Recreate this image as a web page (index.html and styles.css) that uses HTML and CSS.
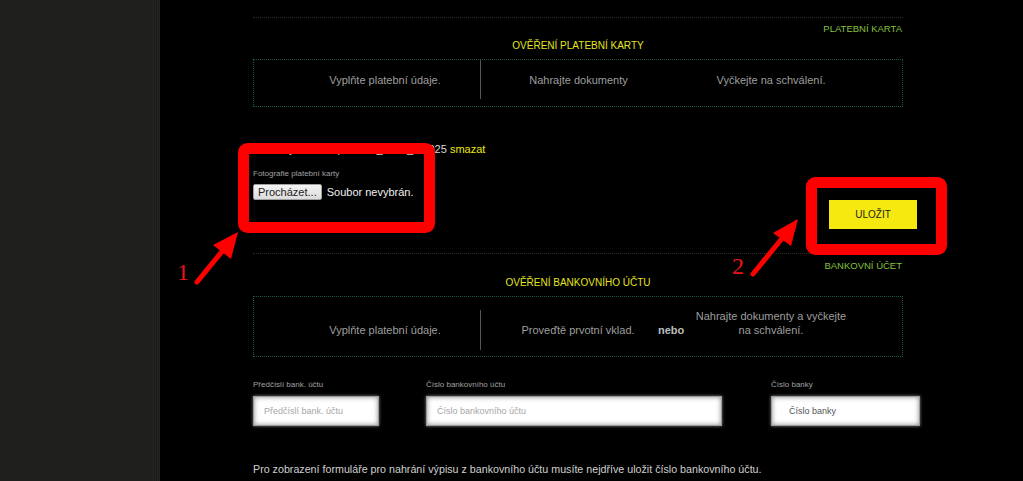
FILE: index.html
```html
<!DOCTYPE html>
<html lang="cs">
<head>
<meta charset="utf-8">
<title>Ověření</title>
<link rel="stylesheet" href="styles.css">
</head>
<body>
<div class="page">
  <aside class="sidebar"><div class="sidebar-edge"></div></aside>
  <main class="main">
    <div class="wrap">
      <section class="verify">
        <div class="tag">PLATEBNÍ KARTA</div>
        <h2 class="title">OVĚŘENÍ PLATEBNÍ KARTY</h2>
        <div class="steps steps-card">
          <div class="step step-first">Vyplňte platební údaje.</div>
          <div class="step step-mid">Nahrajte dokumenty</div>
          <div class="step step-last">Vyčkejte na schválení.</div>
        </div>
      </section>

      <div class="upload-row">
        <div class="upload">
          <p class="file-info">Nahraný soubor: platební_karta_1.2025 <a class="del" href="#">smazat</a></p>
          <div class="field-label">Fotografie platební karty</div>
          <div class="file">
            <span class="file-btn">Procházet...</span>
            <span class="file-name">Soubor nevybrán.</span>
          </div>
        </div>
        <button class="save">ULOŽIT</button>
      </div>

      <section class="verify bank">
        <div class="tag">BANKOVNÍ ÚČET</div>
        <h2 class="title">OVĚŘENÍ BANKOVNÍHO ÚČTU</h2>
        <div class="steps steps-bank">
          <div class="step step-first">Vyplňte platební údaje.</div>
          <div class="step step-mid2">Proveďtě prvotní vklad.</div>
          <div class="step step-or">nebo</div>
          <div class="step step-last2">Nahrajte dokumenty a vyčkejte<br>na schválení.</div>
        </div>
      </section>

      <div class="fields">
        <div class="field f-pre">
          <div class="field-label">Předčíslí bank. účtu</div>
          <div class="input"><span class="ph">Předčíslí bank. účtu</span></div>
        </div>
        <div class="field f-num">
          <div class="field-label">Číslo bankovního účtu</div>
          <div class="input"><span class="ph">Číslo bankovního účtu</span></div>
        </div>
        <div class="field f-bank">
          <div class="field-label">Číslo banky</div>
          <div class="input input-bank"><span class="val">Číslo banky</span></div>
        </div>
      </div>

      <p class="note">Pro zobrazení formuláře pro nahrání výpisu z bankovního účtu musíte nejdříve uložit číslo bankovního účtu.</p>
    </div>
  </main>

  <svg class="annot" width="1023" height="481" viewBox="0 0 1023 481" aria-hidden="true">
    <rect x="243.5" y="148.5" width="186" height="79" rx="4" fill="none" stroke="#ff0000" stroke-width="11"/>
    <rect x="811.5" y="182.5" width="130" height="67" rx="4" fill="none" stroke="#ff0000" stroke-width="11"/>
    <line x1="197" y1="282" x2="224" y2="249" stroke="#ff0000" stroke-width="5" stroke-linecap="round"/>
    <polygon points="238,232 213,245 231,259" fill="#ff0000"/>
    <line x1="753" y1="274" x2="784" y2="236" stroke="#ff0000" stroke-width="5" stroke-linecap="round"/>
    <polygon points="798,219 773,233 791,246" fill="#ff0000"/>
    <text x="177" y="280" class="num">1</text>
    <text x="732" y="274" class="num">2</text>
  </svg>
</div>
</body>
</html>
```

FILE: styles.css
```css
* { box-sizing: border-box; }
html, body { margin: 0; padding: 0; }
body {
  background: #000;
  font-family: "Liberation Sans", Arial, sans-serif;
  color: #a8a8a8;
  width: 1023px;
  height: 481px;
  overflow: hidden;
}
.page {
  position: relative;
  display: flex;
  width: 1023px;
  height: 481px;
}
.sidebar {
  width: 160px;
  flex: none;
  background: #1f1f1d;
  display: flex;
  justify-content: flex-end;
}
.sidebar-edge {
  width: 7px;
  background: repeating-linear-gradient(90deg, #242422 0 1px, #1c1c1a 1px 2px);
}
.main {
  flex: 1;
  background: #000;
}
.wrap {
  margin-left: 93px;
  width: 668px;
  padding-top: 17px;
}
.verify {
  width: 650px;
  border-top: 1px dotted #2a2a2a;
}
.tag {
  text-align: right;
  font-size: 9.5px;
  color: #86c03e;
  line-height: 12px;
  margin-top: 5px;
  padding-right: 1px;
}
.title {
  margin: 5px 0 0;
  text-align: center;
  font-weight: normal;
  font-size: 10px;
  line-height: 12px;
  color: #e4e41e;
}
.steps {
  display: flex;
  align-items: center;
  border: 1px dotted #1c5a3e;
  font-size: 11px;
  color: #9e9e9e;
  text-align: center;
}
.steps-card {
  height: 48px;
  margin-top: 7px;
  padding-bottom: 7px;
}
.steps-bank {
  height: 61px;
  margin-top: 7px;
  padding-top: 13px;
  padding-bottom: 6px;
}
.step { line-height: 14px; white-space: nowrap; }
.step-first {
  width: 227px;
  padding-left: 36px;
  align-self: stretch;
  display: flex;
  align-items: center;
  justify-content: center;
  border-right: 1px solid #555;
}
.step-mid { width: 195px; }
.step-last { width: 190px; }
.step-mid2 { width: 174px; padding-left: 20px; }
.step-or { width: 40px; font-weight: bold; color: #bdbdbd; text-align: left; padding-left: 3px; }
.step-last2 { width: 152px; margin-bottom: 14px; }

.upload-row {
  display: flex;
  justify-content: space-between;
  align-items: flex-start;
  padding-top: 35px;
  height: 146px;
}
.upload { width: 260px; }
.file-info {
  margin: 0;
  font-size: 11px;
  line-height: 14px;
  color: #d8d8d8;
  white-space: nowrap;
}
.del { color: #e8e81c; text-decoration: none; }
.field-label {
  font-size: 8px;
  line-height: 10px;
  color: #a0a0a0;
}
.upload .field-label { margin-top: 13px; }
.file {
  display: flex;
  align-items: center;
  margin-top: 5px;
  gap: 5px;
}
.file-btn {
  display: inline-block;
  height: 16px;
  padding: 0 4px;
  font-size: 11px;
  line-height: 14px;
  color: #222;
  background: linear-gradient(#f4f4f4, #dcdcdc);
  border: 1px solid #a0a0a0;
  border-radius: 2px;
}
.file-name { font-size: 11px; color: #f0f0f0; }
.save {
  margin-top: 58px;
  margin-right: 4px;
  width: 88px;
  height: 29px;
  border: 0;
  background: #f5e90f;
  color: #222;
  font-family: "Liberation Sans", Arial, sans-serif;
  font-size: 10px;
  padding: 0;
}
.bank .tag { margin-top: 6px; }
.bank .title { margin-top: 5px; }

.fields {
  display: flex;
  margin-top: 23px;
}
.field .field-label { margin-bottom: 6px; }
.f-pre { width: 173px; }
.f-pre .input { width: 126px; }
.f-num { width: 345px; }
.f-num .input { width: 296px; }
.f-bank { width: 149px; }
.f-bank .input { width: 149px; }
.input {
  height: 30px;
  background: #fff;
  border: 1px solid #9a9a9a;
  box-shadow: inset 0 0 5px #8a8a8a, 0 0 3px rgba(255,255,255,0.5);
  display: flex;
  align-items: center;
  padding-left: 10px;
  font-size: 9px;
}
.ph { color: #a6a6a6; }
.input-bank { padding-left: 17px; }
.val { color: #555; }
.note {
  margin: 36px 0 0;
  font-size: 10.7px;
  line-height: 14px;
  color: #cfcfcf;
  white-space: nowrap;
}
.annot {
  position: absolute;
  left: 0;
  top: 0;
  pointer-events: none;
}
.num {
  font-family: "Liberation Serif", "Times New Roman", serif;
  font-size: 24px;
  fill: #e8141c;
}
```
